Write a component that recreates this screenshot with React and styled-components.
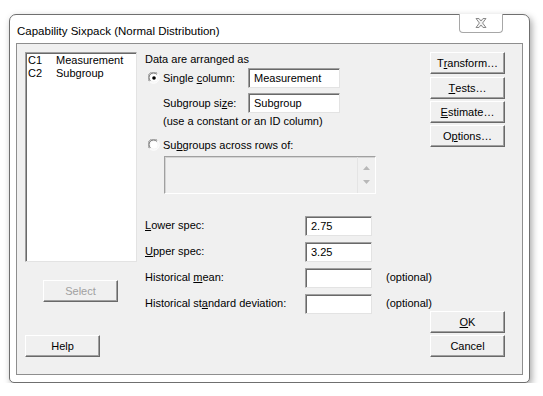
import React from 'react';
import styled, { createGlobalStyle } from 'styled-components';

const GlobalStyle = createGlobalStyle`
  body {
    margin: 0;
    background: #ffffff;
    font-family: "Liberation Sans", Arial, sans-serif;
    font-size: 11px;
    color: #000;
  }
`

function Radio ({ checked }) {
    return (
        <RadioIcon width="12" height="12" viewBox="0 0 12 12">
            <circle cx="6" cy="6" r="5.5" fill="#f4f4f4" />
            <path d="M1.5 9.5 A5 5 0 0 1 9.5 1.5" fill="none" stroke="#9a9a9a" strokeWidth="1" />
            <path d="M2.3 8.8 A4 4 0 0 1 8.8 2.3" fill="none" stroke="#6a6a6a" strokeWidth="1" />
            <path d="M9.5 1.5 A5 5 0 0 1 1.5 9.5" fill="none" stroke="#ffffff" strokeWidth="1" />
            <circle cx="6" cy="6" r="3.6" fill="#ffffff" />
            {checked && <circle cx="6" cy="6" r="1.8" fill="#000" />}
        </RadioIcon>
    )
}

function App () {

    return (
        <>
        <GlobalStyle />
        <Page>
            <Window>
                <TitleBar>
                    <Title>Capability Sixpack (Normal Distribution)</Title>
                    <CloseButton>
                        <svg width="14" height="12" viewBox="0 0 14 12">
                            <path d="M2 1.5 H5 L7 4 L9 1.5 H12 L8.6 6 L12 10.5 H9 L7 8 L5 10.5 H2 L5.4 6 Z"
                                fill="#f2f2f2" stroke="#8a8a8a" strokeWidth="1" strokeLinejoin="round" />
                        </svg>
                    </CloseButton>
                </TitleBar>
                <Client>
                    <LeftCol>
                        <ListBox>
                            <ListRow><ListCode>C1</ListCode>Measurement</ListRow>
                            <ListRow><ListCode>C2</ListCode>Subgroup</ListRow>
                        </ListBox>
                        <Button $disabled $top={18} $left={18}>Select</Button>
                        <Button $top={33}>Help</Button>
                    </LeftCol>

                    <MidCol>
                        <Heading>Data are arranged as</Heading>
                        <FieldRow $top={2}>
                            <RowLabel>
                                <Radio checked />
                                <RadioText>Single <u>c</u>olumn:</RadioText>
                            </RowLabel>
                            <TextField $width={92}>Measurement</TextField>
                        </FieldRow>
                        <FieldRow $top={5}>
                            <RowLabel $indent={18}>Subgroup si<u>z</u>e:</RowLabel>
                            <TextField $width={92}>Subgroup</TextField>
                        </FieldRow>
                        <Hint>(use a constant or an ID column)</Hint>
                        <RadioRow>
                            <Radio />
                            <RadioText>Su<u>b</u>groups across rows of:</RadioText>
                        </RadioRow>
                        <MultiBox>
                            <ScrollBar>
                                <svg width="7" height="4" viewBox="0 0 7 4"><path d="M0 4 L3.5 0 L7 4 Z" fill="#b8b8b8" /></svg>
                                <svg width="7" height="4" viewBox="0 0 7 4"><path d="M0 0 L3.5 4 L7 0 Z" fill="#b8b8b8" /></svg>
                            </ScrollBar>
                        </MultiBox>
                        <SpecRow $top={22}>
                            <SpecLabel><u>L</u>ower spec:</SpecLabel>
                            <TextField $width={67}>2.75</TextField>
                        </SpecRow>
                        <SpecRow>
                            <SpecLabel><u>U</u>pper spec:</SpecLabel>
                            <TextField $width={67}>3.25</TextField>
                        </SpecRow>
                        <SpecRow>
                            <SpecLabel>Historical <u>m</u>ean:</SpecLabel>
                            <TextField $width={67} />
                            <Optional>(optional)</Optional>
                        </SpecRow>
                        <SpecRow>
                            <SpecLabel>Historical st<u>a</u>ndard deviation:</SpecLabel>
                            <TextField $width={67} />
                            <Optional>(optional)</Optional>
                        </SpecRow>
                    </MidCol>

                    <RightCol>
                        <Button>T<u>r</u>ansform…</Button>
                        <Button $top={3}><u>T</u>ests…</Button>
                        <Button $top={2}><u>E</u>stimate…</Button>
                        <Button $top={2}>O<u>p</u>tions…</Button>
                        <Button $top={164}><u>O</u>K</Button>
                        <Button $top={2}>Cancel</Button>
                    </RightCol>
                </Client>
            </Window>
        </Page>
        </>
    )

}

const Page = styled.div`
  padding : 14px 0 0 9px;
`
const Window = styled.div`
  box-sizing : border-box;
  width : 521px;
  height : 369px;
  display : flex;
  flex-direction : column;
  padding : 0 6px 7px 6px;
  background : #ffffff;
  border : 1px solid #6f6f6f;
  border-radius : 7px 7px 5px 5px;
  box-shadow : 2px 3px 7px rgba(0, 0, 0, 0.35);
`
const TitleBar = styled.div`
  height : 28px;
  display : flex;
  flex-direction : row;
  align-items : center;
  position : relative;
`
const Title = styled.div`
  padding-left : 1px;
  padding-top : 3px;
  font-size : 11.5px;
  color : #000;
`
const CloseButton = styled.div`
  position : absolute;
  top : -1px;
  right : 20px;
  width : 44px;
  height : 19px;
  box-sizing : border-box;
  display : flex;
  align-items : center;
  justify-content : center;
  border : 1px solid #a7a7a7;
  border-top : none;
  border-radius : 0 0 4px 4px;
  background : #ffffff;
`
const Client = styled.div`
  box-sizing : border-box;
  width : 507px;
  height : 332px;
  display : flex;
  flex-direction : row;
  background : #f0f0f0;
  border : 1px solid #8e8e8e;
`
const LeftCol = styled.div`
  display : flex;
  flex-direction : column;
  align-items : flex-start;
  margin : 8px 0 0 8px;
  width : 112px;
  flex : none;
`
const ListBox = styled.div`
  box-sizing : border-box;
  width : 112px;
  height : 210px;
  background : #ffffff;
  border : 1px solid;
  border-color : #a0a0a0 #e3e3e3 #e3e3e3 #a0a0a0;
  box-shadow : inset 1px 1px 0 #696969;
  padding : 1px 0 0 2px;
`
const ListRow = styled.div`
  display : flex;
  flex-direction : row;
  line-height : 13px;
  height : 13px;
`
const ListCode = styled.span`
  width : 28px;
`
const Button = styled.div`
  box-sizing : border-box;
  width : 75px;
  height : 22px;
  flex : none;
  margin-top : ${p => p.$top || 0}px;
  margin-left : ${p => p.$left || 0}px;
  display : flex;
  align-items : center;
  justify-content : center;
  background : #f0f0f0;
  border : 1px solid;
  border-color : #ffffff #696969 #696969 #ffffff;
  box-shadow : inset -1px -1px 0 #a0a0a0;
  color : ${p => p.$disabled ? '#a0a0a0' : '#000'};
  padding-bottom : 1px;
`
const MidCol = styled.div`
  display : flex;
  flex-direction : column;
  margin : 8px 0 0 8px;
  width : 285px;
  flex : none;
`
const Heading = styled.div`
  line-height : 14px;
`
const FieldRow = styled.div`
  display : flex;
  flex-direction : row;
  align-items : center;
  height : 20px;
  margin-top : ${p => p.$top || 0}px;
`
const RowLabel = styled.div`
  display : flex;
  flex-direction : row;
  align-items : center;
  flex : none;
  width : ${p => 103 - (p.$indent || 0)}px;
  padding-left : ${p => p.$indent || 0}px;
`
const RadioIcon = styled.svg`
  display : block;
  margin-left : 3px;
  flex : none;
`
const RadioText = styled.span`
  margin-left : 3px;
`
const TextField = styled.div`
  box-sizing : border-box;
  flex : none;
  width : ${p => p.$width}px;
  height : 20px;
  display : flex;
  align-items : center;
  padding : 0 0 1px 5px;
  background : #ffffff;
  border : 1px solid;
  border-color : #a0a0a0 #e3e3e3 #e3e3e3 #a0a0a0;
  box-shadow : inset 1px 1px 0 #696969;
`
const Hint = styled.div`
  margin-top : 1px;
  padding-left : 18px;
  line-height : 14px;
`
const RadioRow = styled.div`
  display : flex;
  flex-direction : row;
  align-items : center;
  margin-top : 10px;
  height : 14px;
`
const MultiBox = styled.div`
  box-sizing : border-box;
  margin : 4px 0 0 19px;
  width : 212px;
  height : 38px;
  display : flex;
  flex-direction : row;
  justify-content : flex-end;
  background : #f0f0f0;
  border : 1px solid;
  border-color : #a0a0a0 #ffffff #ffffff #a0a0a0;
  box-shadow : inset 1px 1px 0 #d4d4d4;
`
const ScrollBar = styled.div`
  width : 17px;
  display : flex;
  flex-direction : column;
  align-items : center;
  justify-content : space-between;
  padding : 9px 0 9px 0;
  border-left : 1px solid #e4e4e4;
`
const SpecRow = styled.div`
  display : flex;
  flex-direction : row;
  align-items : center;
  height : 20px;
  margin-top : ${p => p.$top || 6}px;
`
const SpecLabel = styled.div`
  width : 160px;
  flex : none;
  padding-bottom : 3px;
`
const Optional = styled.div`
  margin-left : 14px;
  padding-bottom : 3px;
  white-space : nowrap;
`
const RightCol = styled.div`
  display : flex;
  flex-direction : column;
  margin : 8px 0 0 0;
  padding-left : 0;
`

export default App;
